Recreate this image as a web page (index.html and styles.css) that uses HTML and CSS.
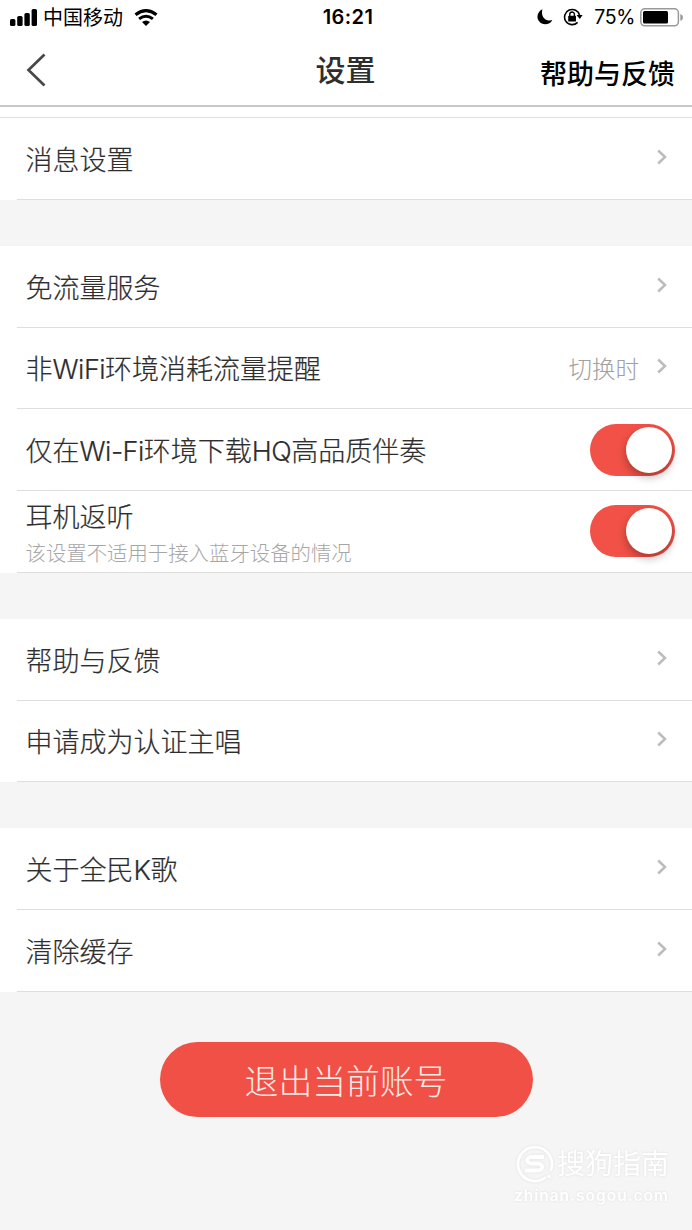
FILE: index.html
```html
<!DOCTYPE html>
<html lang="zh-CN">
<head>
    <meta charset="UTF-8" />
    <meta name="viewport" content="width=device-width, initial-scale=1.0" />
    <title>设置</title>
    <link rel="stylesheet" href="styles.css">
</head>

<body>
    <div class="status-bar">
        <div class="status-left">
            <svg class="signal" width="27" height="17" viewBox="0 0 27 17">
                <rect x="0" y="10" width="5.4" height="7" rx="1.6"/>
                <rect x="7.2" y="7" width="5.4" height="10" rx="1.6"/>
                <rect x="14.4" y="4" width="5.4" height="13" rx="1.6"/>
                <rect x="21.6" y="0" width="5.4" height="17" rx="1.6"/>
            </svg>
            <span class="carrier">中国移动</span>
            <svg class="wifi" width="24" height="17" viewBox="0 0 24 17">
                <path d="M1.5 5.7 Q12 -2.3 22.5 5.7" fill="none" stroke="#000" stroke-width="3.2"/>
                <path d="M5.1 9.9 Q12 4.6 18.9 9.9" fill="none" stroke="#000" stroke-width="3"/>
                <path d="M8 13 Q12 9.8 16 13 L12 17 Z"/>
            </svg>
        </div>
        <span class="time">16:21</span>
        <div class="status-right">
            <svg class="moon" width="16" height="16" viewBox="0 0 16 16">
                <path d="M5.4 0.3 C0.6 2.5 -1 8.2 1.9 12.1 C5.2 16.6 12.7 16.4 15.3 11 C10.6 12.9 3.2 9.4 5.4 0.3 Z"/>
            </svg>
            <svg class="lock" width="20" height="18" viewBox="0 0 20 18">
                <path d="M16.6 7.4 A7.6 7.6 0 1 0 14.6 14.4" fill="none" stroke="#000" stroke-width="1.6"/>
                <path d="M13.6 7 L19.6 7 L16.8 11 Z"/>
                <rect x="5.2" y="7.8" width="7.8" height="5.8" rx="0.7"/>
                <path d="M6.8 8.4 V6.3 a2.3 2.3 0 0 1 4.6 0 V8.4" fill="none" stroke="#000" stroke-width="1.4"/>
            </svg>
            <span class="percent">75%</span>
            <svg class="battery" width="44" height="19" viewBox="0 0 44 19">
                <rect x="0.8" y="0.8" width="37.6" height="17" rx="4" fill="none" stroke="#999" stroke-width="1.5"/>
                <rect x="3" y="3" width="25" height="12.6" rx="1.5"/>
                <path d="M40.3 6 Q43 7 43 9.4 Q43 11.8 40.3 12.8 Z" fill="#999"/>
            </svg>
        </div>
    </div>

    <div class="nav-bar">
        <svg class="back" width="20" height="34" viewBox="0 0 20 34">
            <path d="M18.5 1.5 L2.5 17 L18.5 32.5" fill="none" stroke="#484848" stroke-width="2.7"/>
        </svg>
        <h1>设置</h1>
        <span class="nav-action">帮助与反馈</span>
    </div>

    <div class="group first">
        <div class="row">
            <span class="label">消息设置</span>
            <svg class="arrow" viewBox="0 0 10 16"><path d="M1.2 1.5 L8 8 L1.2 14.5"/></svg>
        </div>
    </div>

    <div class="group">
        <div class="row">
            <span class="label">免流量服务</span>
            <svg class="arrow" viewBox="0 0 10 16"><path d="M1.2 1.5 L8 8 L1.2 14.5"/></svg>
        </div>
        <div class="row">
            <span class="label">非<span class="latin">WiFi</span>环境消耗流量提醒</span>
            <span class="value">切换时</span>
            <svg class="arrow" viewBox="0 0 10 16"><path d="M1.2 1.5 L8 8 L1.2 14.5"/></svg>
        </div>
        <div class="row">
            <span class="label">仅在<span class="latin">Wi-Fi</span>环境下载<span class="latin">HQ</span>高品质伴奏</span>
            <span class="switch"><span class="knob"></span></span>
        </div>
        <div class="row">
            <div class="stack">
                <span class="label">耳机返听</span>
                <small>该设置不适用于接入蓝牙设备的情况</small>
            </div>
            <span class="switch"><span class="knob"></span></span>
        </div>
    </div>

    <div class="group">
        <div class="row">
            <span class="label">帮助与反馈</span>
            <svg class="arrow" viewBox="0 0 10 16"><path d="M1.2 1.5 L8 8 L1.2 14.5"/></svg>
        </div>
        <div class="row">
            <span class="label">申请成为认证主唱</span>
            <svg class="arrow" viewBox="0 0 10 16"><path d="M1.2 1.5 L8 8 L1.2 14.5"/></svg>
        </div>
    </div>

    <div class="group">
        <div class="row">
            <span class="label">关于全民<span class="latin">K</span>歌</span>
            <svg class="arrow" viewBox="0 0 10 16"><path d="M1.2 1.5 L8 8 L1.2 14.5"/></svg>
        </div>
        <div class="row">
            <span class="label">清除缓存</span>
            <svg class="arrow" viewBox="0 0 10 16"><path d="M1.2 1.5 L8 8 L1.2 14.5"/></svg>
        </div>
    </div>

    <button class="logout">退出当前账号</button>

    <div class="watermark">
        <div class="brand">
            <svg width="38" height="38" viewBox="0 0 38 38" fill="none" stroke="#fff">
                <path d="M30 32 A17 17 0 1 1 34.5 26" stroke-width="2.8"/>
                <path d="M28 12 H16 C9.5 12 9.5 18.5 16 18.5 H21 C28 18.5 28 25.5 21 25.5 H9" stroke-width="4"/>
                <circle cx="33" cy="31.5" r="1.8" fill="#fff" stroke="none"/>
            </svg>
            <span>搜狗指南</span>
        </div>
        <div class="site">zhinan.sogou.com</div>
    </div>
</body>

</html>
```
FILE: styles.css
```css
body {
    margin: 0;
    height: 1230px;
    overflow: hidden;
    position: relative;
    background-color: #f5f5f5;
    color: #2e2e2e;
    font-family: Inter, "Noto Sans CJK SC", sans-serif;
}

/* status bar */
.status-bar {
    display: grid;
    grid-template-columns: 1fr auto 1fr;
    align-items: center;
    height: 34px;
    padding: 0 8px 0 10px;
    background-color: #ffffff;
    color: #000000;
    line-height: 34px;
}
.status-left,
.status-right {
    display: flex;
    align-items: center;
}
.status-right {
    justify-content: flex-end;
}
.carrier {
    margin-left: 6px;
    padding-top: 2px;
    font-size: 20px;
    line-height: 32px;
}
.wifi {
    margin-left: 11px;
}
.time {
    padding: 1px 0 0 2px;
    font-size: 20px;
    font-weight: 600;
    line-height: 33px;
    letter-spacing: 0.4px;
}
.moon {
    margin-right: 10px;
}
.percent {
    margin-left: 11px;
    padding-top: 1px;
    font-size: 19.5px;
    line-height: 33px;
    letter-spacing: -0.4px;
}
.battery {
    margin-left: 5px;
}

/* title bar */
.nav-bar {
    display: grid;
    grid-template-columns: 1fr auto 1fr;
    align-items: center;
    box-sizing: border-box;
    height: 73px;
    padding: 0 17px 0 26px;
    border-bottom: 2px solid #c8c8c8;
    background-color: #ffffff;
}
h1 {
    margin: 0 10px 0 0;
    font-size: 30px;
    font-weight: 500;
    line-height: 72px;
}
.nav-action {
    padding-top: 4px;
    justify-self: end;
    color: #000000;
    font-size: 27px;
    font-weight: 500;
}

/* settings list */
.group {
    margin-bottom: 46px;
    background-color: #ffffff;
}
.first {
    padding-top: 10px;
}
.first::before {
    content: "";
    display: block;
    height: 1px;
    background-color: #e2e2e2;
}
.row {
    display: flex;
    align-items: center;
    box-sizing: border-box;
    height: 81.75px;
    margin-left: 17px;
    padding: 0 17px 0 8.5px;
    border-bottom: 1px solid #dedede;
}
.label {
    flex: 1;
    padding-top: 5px;
    font-size: 27px;
    font-weight: 300;
    line-height: 36px;
    white-space: nowrap;
    -webkit-text-stroke: 0.2px;
}
.latin {
    letter-spacing: -0.5px;
}
.value {
    margin-right: 18px;
    color: #a0a0a0;
    font-size: 23.5px;
    font-weight: 300;
}
.arrow {
    width: 10px;
    height: 16px;
    margin: 0 8px 3px 0;
    fill: none;
    stroke: #bcbcbc;
    stroke-width: 2.5px;
}
.stack {
    display: flex;
    flex: 1;
    flex-direction: column;
    padding-top: 3px;
}
small {
    color: #a6a6a6;
    font-size: 20.4px;
    font-weight: 300;
    line-height: 35px;
}
.switch {
    display: flex;
    justify-content: flex-end;
    box-sizing: border-box;
    width: 85px;
    height: 52px;
    padding: 3px;
    border-radius: 26px;
    background-color: #f15146;
}
.knob {
    width: 46px;
    height: 46px;
    border-radius: 50%;
    background-color: #ffffff;
    box-shadow: 0 4px 8px rgba(0, 0, 0, 0.3);
}

.logout {
    display: block;
    width: 373px;
    height: 75px;
    margin: 50px 0 0 159.5px;
    padding: 0;
    border: none;
    border-radius: 38px;
    background-color: #f05045;
    color: #ffe9e5;
    font-family: inherit;
    font-size: 33.8px;
    font-weight: 300;
}

/* watermark laid over the page corner */
.watermark {
    position: absolute;
    right: 23px;
    bottom: 22px;
    color: #ffffff;
    filter: drop-shadow(0 0 1px #dddddd);
}
.brand {
    display: flex;
    align-items: center;
    gap: 3px;
    margin-left: 2px;
    font-size: 28px;
    line-height: 40px;
}
.site {
    font-size: 15.5px;
    font-weight: 600;
    letter-spacing: 1px;
    line-height: 24px;
}
```
